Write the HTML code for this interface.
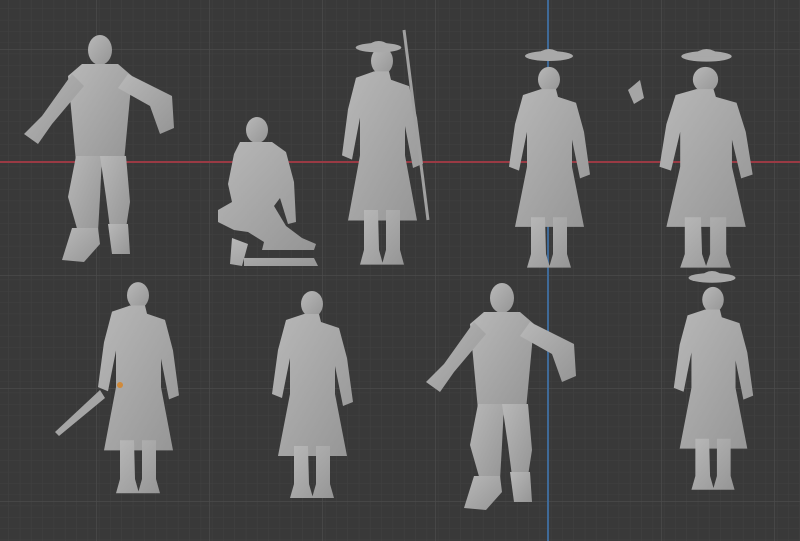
<!DOCTYPE html>
<html><head><style>
html,body{margin:0;padding:0;background:#393939;}
svg{display:block}
</style></head><body>
<svg width="800" height="541" viewBox="0 0 800 541" xmlns="http://www.w3.org/2000/svg">
<defs>
<pattern id="minor" x="9" y="9" width="11.3" height="11.3" patternUnits="userSpaceOnUse">
<path d="M11.3 0V11.3M0 11.3H11.3" stroke="#414141" stroke-width="1" fill="none"/>
</pattern>
<pattern id="major" x="-17" y="-64" width="113" height="113" patternUnits="userSpaceOnUse">
<path d="M0 0V113M0 0H113" stroke="#4d4d4d" stroke-width="1.3" fill="none"/>
</pattern>
<linearGradient id="g" x1="0" x2="1" y1="0" y2="1">
<stop offset="0" stop-color="#b8b8b8"/><stop offset="1" stop-color="#959595"/>
</linearGradient>
<g id="stand" fill="url(#g)">
<ellipse cx="50" cy="18" rx="11" ry="13"/>
<path d="M43 28h14l2 8 18 6 8 30 6 44-10 4-8-40v28l12 62H16l12-62V72l-8 40-10-4 6-44 8-30 18-6z"/>
<path d="M32 160h14l1 38 4 14H28l4-14zM54 160h14v38l4 14H50l4-14z"/>
</g>
<g id="hat" fill="#a9a9a9"><ellipse cx="50" cy="8" rx="24" ry="5"/><path d="M36 8q14-14 28 0z"/></g>
<g id="jump" fill="url(#g)">
<ellipse cx="80" cy="18" rx="12" ry="15"/>
<path d="M62 32H98L112 44L104 130H56L48 44Z"/>
<path d="M52 42L64 54L32 92L18 112L4 102L22 84Z"/>
<path d="M108 42L98 56L130 74L140 102L154 96L152 64Z"/>
<path d="M56 124H82L80 165L78 200H58L48 165Z"/>
<path d="M52 196H78L80 212L64 230L42 228Z"/>
<path d="M80 124H106L110 170L106 196H90L86 165Z"/>
<path d="M88 192H108L110 222H92Z"/>
</g>
</defs>
<rect width="800" height="541" fill="#393939"/>
<rect width="800" height="541" fill="url(#minor)"/>
<rect width="800" height="541" fill="url(#major)"/>
<line x1="0" y1="162" x2="800" y2="162" stroke="#9a3a44" stroke-width="2"/>
<line x1="548" y1="0" x2="548" y2="541" stroke="#3f6a98" stroke-width="2"/>

<!-- top row -->
<use href="#jump" transform="translate(20,32)"/>
<g fill="url(#g)">
<ellipse cx="257" cy="130" rx="11" ry="13"/>
<path d="M240 142h32l14 10 8 30 2 40-8 2-8-26-6 8 12 20 16 12 14 6-2 6-52 0 2-8-16-10-14-2-16-8 0-12 14-8-4-18 6-30z"/>
<path d="M232 238l16 6-6 22-12-2zM244 258h70l4 8h-74z"/>
</g>
<use href="#stand" transform="translate(332,42) scale(1.0,1.05)"/>
<use href="#hat" transform="translate(331,40) scale(0.95)"/>
<line x1="404" y1="30" x2="428" y2="220" stroke="#a0a0a0" stroke-width="3"/>
<use href="#stand" transform="translate(499,62) scale(1.0,0.97)"/>
<use href="#hat" transform="translate(499,48)"/>
<use href="#stand" transform="translate(648,62) scale(1.15,0.97)"/>
<use href="#hat" transform="translate(654,48) scale(1.05)"/>
<path d="M640 80l-12 10 6 14 10-6z" fill="#a5a5a5"/>

<!-- bottom row -->
<use href="#stand" transform="translate(88,277) scale(1.0,1.02)"/>
<path d="M100 390l-45 42 4 4 46-38z" fill="#a5a5a5"/>
<circle cx="120" cy="385" r="3" fill="#d08a3a"/>
<use href="#stand" transform="translate(262,286)"/>
<use href="#jump" transform="translate(422,280)"/>
<use href="#stand" transform="translate(664,282) scale(0.98,0.98)"/>
<use href="#hat" transform="translate(663,270) scale(0.98)"/>
</svg>
</body></html>
